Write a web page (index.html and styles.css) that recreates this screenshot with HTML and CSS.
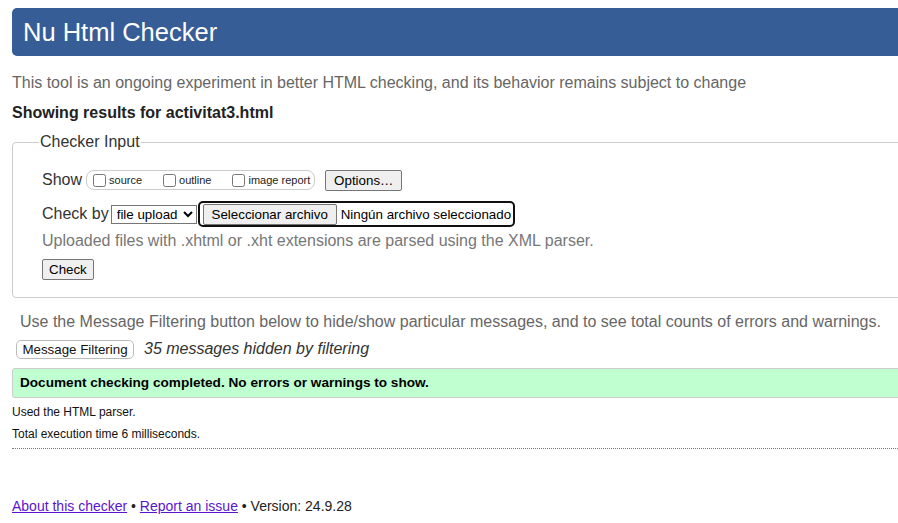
FILE: index.html
```html
<!DOCTYPE html>
<html lang="en">
<head>
<meta charset="utf-8">
<title>Showing results for activitat3.html - Nu Html Checker</title>
<link rel="stylesheet" href="styles.css">
</head>
<body>
<div class="page">
  <h1 class="banner">Nu Html Checker</h1>
  <p class="intro">This tool is an ongoing experiment in better HTML checking, and its behavior remains subject to change</p>
  <p class="showing">Showing results for activitat3.html</p>

  <fieldset class="checker">
    <legend class="checker-legend">Checker Input</legend>
    <div class="row row-show">
      <span class="label">Show</span>
      <fieldset class="options">
        <label class="opt"><input type="checkbox" class="cb">source</label>
        <label class="opt"><input type="checkbox" class="cb">outline</label>
        <label class="opt"><input type="checkbox" class="cb">image report</label>
      </fieldset>
      <button class="btn btn-options" type="button">Options…</button>
    </div>
    <div class="row row-check">
      <span class="label">Check by</span>
      <select class="sel"><option>file upload</option></select>
      <span class="file">
        <button class="btn btn-file" type="button">Seleccionar archivo</button>
        <span class="file-name">Ningún archivo seleccionado</span>
      </span>
    </div>
    <p class="hint">Uploaded files with .xhtml or .xht extensions are parsed using the XML parser.</p>
    <div class="row row-submit">
      <button class="btn" type="button">Check</button>
    </div>
  </fieldset>

  <p class="filter-info">Use the Message Filtering button below to hide/show particular messages, and to see total counts of errors and warnings.</p>
  <div class="filter-row">
    <button class="btn-filter" type="button">Message Filtering</button>
    <span class="hidden-count">35 messages hidden by filtering</span>
  </div>

  <p class="success">Document checking completed. No errors or warnings to show.</p>
  <p class="details">Used the HTML parser.</p>
  <p class="details">Total execution time 6 milliseconds.</p>
  <hr class="sep">

  <p class="footer"><a href="#" class="flink">About this checker</a> • <a href="#" class="flink">Report an issue</a> • Version: 24.9.28</p>
</div>
</body>
</html>
```

FILE: styles.css
```css
html {
  overflow: hidden;
}
body {
  margin: 0;
  background: #fff;
  color: #222;
  font-family: "Liberation Sans", Arial, sans-serif;
}
.page {
  width: 1000px;
  padding: 8px 0 0 12px;
}
.banner {
  margin: 0;
  height: 48px;
  line-height: 48px;
  padding-left: 11px;
  background: #365d95;
  color: #fff;
  font-size: 25.5px;
  font-weight: normal;
  border-radius: 5px;
}
.intro {
  margin: 17px 0 0;
  font-size: 16px;
  line-height: 20px;
  color: #666;
}
.showing {
  margin: 10px 0 0;
  font-size: 16px;
  line-height: 20px;
  font-weight: bold;
  color: #222;
}
.checker {
  margin: 9px 0 0;
  padding: 0 0 17px 26px;
  border: 1px solid #ccc;
  border-radius: 4px;
  min-width: 0;
}
.checker-legend {
  margin-left: 0;
  padding: 0 1px;
  font-size: 16px;
  line-height: 20px;
  color: #333;
}
.row {
  display: flex;
  align-items: center;
  margin-left: 3px;
}
.label {
  font-size: 16px;
  color: #333;
}
.row-show {
  margin-top: 17px;
  height: 22px;
}
.options {
  margin: 0 0 0 4px;
  padding: 0 4px 0 3px;
  height: 18px;
  display: flex;
  align-items: center;
  border: 1px solid #ccc;
  border-radius: 8px;
}
.opt {
  display: flex;
  align-items: center;
  font-size: 11px;
  color: #222;
  margin-right: 18px;
}
.opt:last-child {
  margin-right: 0;
}
.cb {
  width: 13px;
  height: 13px;
  margin: 0 3px 0 3px;
}
.btn {
  font-family: "Liberation Sans", Arial, sans-serif;
  font-size: 13.33px;
  color: #000;
  background: #efefef;
  border: 1px solid #767676;
  border-radius: 2px;
  padding: 1px 6px;
  height: 21px;
  line-height: 17px;
}
.btn-options {
  margin-left: 10px;
  width: 77px;
}
.row-check {
  margin-top: 10px;
  height: 26px;
}
.sel {
  margin-left: 2px;
  font-family: "Liberation Sans", Arial, sans-serif;
  font-size: 13.33px;
  height: 19px;
  width: 86px;
  padding: 0 0 0 1px;
  border: 1px solid #767676;
  border-radius: 0;
  background: #fff;
  color: #000;
}
.file {
  margin-left: 1px;
  display: flex;
  align-items: center;
  height: 26px;
  width: 317px;
  box-sizing: border-box;
  border: 2px solid #101010;
  border-radius: 5px;
  padding-left: 3px;
}
.btn-file {
  width: 134px;
  height: 21px;
}
.file-name {
  margin-left: 4px;
  font-size: 13.33px;
  color: #000;
}
.hint {
  margin: 4px 0 0 3px;
  font-size: 16px;
  line-height: 20px;
  color: #777;
}
.row-submit {
  margin-top: 8px;
}
.filter-info {
  margin: 14px 0 0 8px;
  font-size: 16px;
  line-height: 20px;
  color: #666;
}
.filter-row {
  margin: 6px 0 0 4px;
  height: 22px;
  display: flex;
  align-items: center;
}
.btn-filter {
  font-family: "Liberation Sans", Arial, sans-serif;
  font-size: 13.33px;
  color: #111;
  background: #fff;
  border: 1px solid #bbb;
  border-radius: 5px;
  height: 19px;
  width: 118px;
  padding: 0;
  line-height: 17px;
}
.hidden-count {
  margin-left: 10px;
  font-size: 16px;
  font-style: italic;
  color: #333;
}
.success {
  margin: 8px 0 0;
  height: 30px;
  box-sizing: border-box;
  line-height: 28px;
  padding: 0 7px;
  background: #bfffd0;
  border: 1px solid #ccc;
  border-radius: 3px;
  font-size: 13.6px;
  font-weight: bold;
  color: #000;
}
.details {
  margin: 0;
  font-size: 12px;
  line-height: 22px;
  color: #111;
}
.success + .details {
  margin-top: 3px;
}
.sep {
  margin: 3px 0 0;
  height: 0;
  border: 0;
  border-top: 1px dotted #777;
}
.footer {
  margin: 47px 0 0;
  font-size: 14px;
  line-height: 20px;
  color: #222;
}
.flink {
  color: #5a14d0;
}
```
